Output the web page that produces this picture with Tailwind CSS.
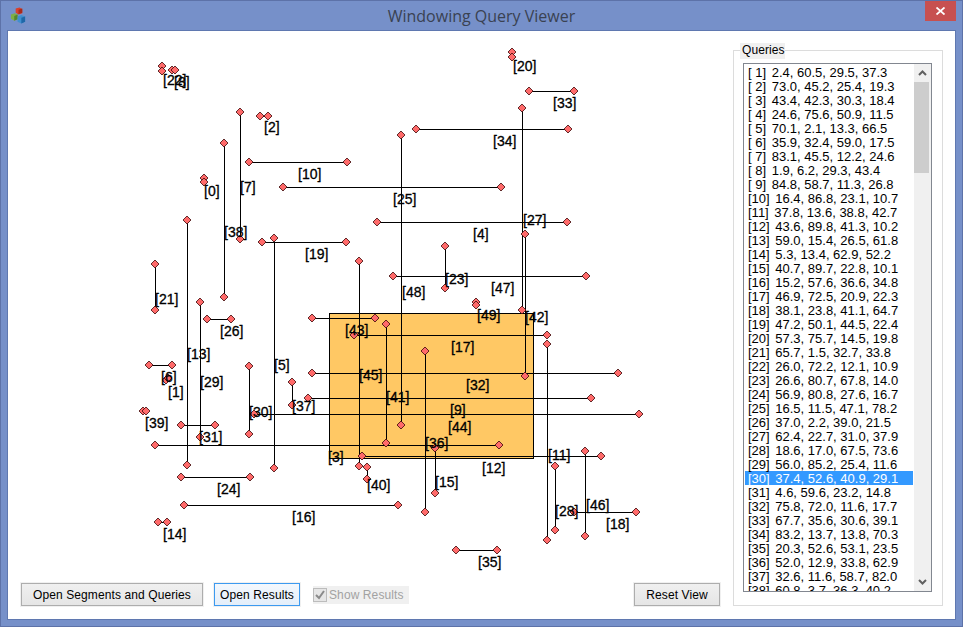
<!DOCTYPE html>
<html lang="en">

<head>
  <meta charset="UTF-8">
  <title>Windowing Query Viewer</title>
  <script src="https://cdn.jsdelivr.net/npm/@tailwindcss/browser@4"></script>
</head>

<body class="w-[963px] h-[627px] overflow-hidden bg-[#7690c9] font-['Liberation_Sans',sans-serif]">
  <div class="w-full h-full flex flex-col border border-[#5d72a8]">
    <!-- title bar -->
    <div class="h-[29px] shrink-0 grid grid-cols-[1fr_auto_1fr] items-start">
      <svg class="ml-[9px] mt-[6px]" width="17" height="17" viewBox="0 0 18 18">
        <path d="M6 1.500l4-1 3 1.500v4.500l-4 1.500-3-2z" fill="#d8402c" />
        <path d="M9 3l4-1.500v4.500l-4 1.500z" fill="#a82a1c" />
        <path d="M1 8l4-1.500 3 1.500v5l-3.500 1.500-3.500-2z" fill="#7fae46" />
        <path d="M4.500 9.500l3.500-1.500v5l-3.500 1.500z" fill="#55862c" />
        <path d="M8 10l4-1.500 4 1.500v5.500l-4 2-4-2z" fill="#3f8fcf" />
        <path d="M12 11.500l4-1.500v5.500l-4 2z" fill="#1f68a8" />
      </svg>
      <div class="font-['Open_Sans',sans-serif] text-[16px] leading-[20px] mt-[5px] text-[#3a4252]">Windowing Query Viewer</div>
      <div class="ml-auto mr-[6px] w-[31px] h-[20px] bg-[#c75050] flex items-center justify-center">
        <svg width="9" height="8" viewBox="0 0 9 8" fill="none" stroke="#fff" stroke-width="1.800">
          <path d="M0.500 0.500l8 7M8.500 0.500l-8 7" />
        </svg>
      </div>
    </div>

    <!-- client area -->
    <div class="h-[590px] mx-[6px] border border-[#5f78b0] bg-white flex">
      <div class="w-[725px] flex flex-col">
        <svg id="plot" class="block shrink-0" width="725" height="552" viewBox="8 31 725 552"></svg>
        <div class="flex items-start pl-[13px] pr-[13px] text-[12px] tracking-[0.1px] text-black">
          <button class="w-[182px] h-[23px] border border-[#adadad] bg-linear-to-b from-[#f0f0f0] to-[#e5e5e5] outline outline-[#f0f0f0]">Open Segments and Queries</button>
          <button class="ml-[11px] w-[86px] h-[23px] border border-[#3c9af0] bg-linear-to-b from-[#f3f8fd] to-[#e4eefa] outline outline-[#f0f0f0]">Open Results</button>
          <div class="ml-[13px] mt-[3px] w-[96px] h-[18px] bg-[#f0f0f0] flex items-center text-[#a2a2a2]">
            <svg width="14" height="14" viewBox="0 0 14 14" class="shrink-0">
              <rect x="0.500" y="0.500" width="13" height="13" fill="#e6e6e6" stroke="#bcbcbc" />
              <path d="M3 7l3 3 5-7" fill="none" stroke="#8a8a8a" stroke-width="2" />
            </svg>
            <span class="ml-[2px]">Show Results</span>
          </div>
          <button class="ml-auto w-[86px] h-[23px] border border-[#adadad] bg-linear-to-b from-[#f0f0f0] to-[#e5e5e5] outline outline-[#f0f0f0]">Reset View</button>
        </div>
      </div>

      <!-- queries group -->
      <div class="relative w-[210px] h-[556px] mt-[19px] border border-[#dcdcdc] pl-[9px] pr-[10px] pt-[12px] pb-[13px]">
        <div class="absolute left-[6px] top-[-8px] w-[45px] h-[16px] bg-[#f0f0f0] px-[2px] text-[12px] leading-[15px] tracking-[0.1px] text-black">Queries</div>
        <div class="h-full border border-[#828790] flex bg-white">
          <div id="rows" class="w-[169px] h-full overflow-hidden pt-px pl-px text-[13px] leading-[16px] text-black"></div>
          <div class="ml-auto w-[17px] h-full bg-[#f0f0f0] flex flex-col">
            <div class="h-[18px] flex items-center justify-center">
              <svg width="9" height="6" viewBox="0 0 9 6" fill="none" stroke="#606060" stroke-width="2"><path d="M1 5l3.500-3.500 3.500 3.500" /></svg>
            </div>
            <div class="w-[15px] h-[91px] bg-[#cdcdcd]"></div>
            <div class="mt-auto h-[18px] flex items-center justify-center">
              <svg width="9" height="6" viewBox="0 0 9 6" fill="none" stroke="#606060" stroke-width="2"><path d="M1 1l3.500 3.500 3.500-3.500" /></svg>
            </div>
          </div>
        </div>
      </div>
    </div>
  </div>

  <script>
    // query list
    const queries = [
      '2.4, 60.5, 29.5, 37.3', '73.0, 45.2, 25.4, 19.3', '43.4, 42.3, 30.3, 18.4', '24.6, 75.6, 50.9, 11.5',
      '70.1, 2.1, 13.3, 66.5', '35.9, 32.4, 59.0, 17.5', '83.1, 45.5, 12.2, 24.6', '1.9, 6.2, 29.3, 43.4',
      '84.8, 58.7, 11.3, 26.8', '16.4, 86.8, 23.1, 10.7', '37.8, 13.6, 38.8, 42.7', '43.6, 89.8, 41.3, 10.2',
      '59.0, 15.4, 26.5, 61.8', '5.3, 13.4, 62.9, 52.2', '40.7, 89.7, 22.8, 10.1', '15.2, 57.6, 36.6, 34.8',
      '46.9, 72.5, 20.9, 22.3', '38.1, 23.8, 41.1, 64.7', '47.2, 50.1, 44.5, 22.4', '57.3, 75.7, 14.5, 19.8',
      '65.7, 1.5, 32.7, 33.8', '26.0, 72.2, 12.1, 10.9', '26.6, 80.7, 67.8, 14.0', '56.9, 80.8, 27.6, 16.7',
      '16.5, 11.5, 47.1, 78.2', '37.0, 2.2, 39.0, 21.5', '62.4, 22.7, 31.0, 37.9', '18.6, 17.0, 67.5, 73.6',
      '56.0, 85.2, 25.4, 11.6', '37.4, 52.6, 40.9, 29.1', '4.6, 59.6, 23.2, 14.8', '75.8, 72.0, 11.6, 17.7',
      '67.7, 35.6, 30.6, 39.1', '83.2, 13.7, 13.8, 70.3', '20.3, 52.6, 53.1, 23.5', '52.0, 12.9, 33.8, 62.9',
      '32.6, 11.6, 58.7, 82.0', '60.8, 3.7, 36.3, 40.2'
    ];
    const rows = document.getElementById('rows');
    queries.forEach(function (q, i) {
      const n = i + 1;
      const row = document.createElement('div');
      row.className = n === 30
        ? 'h-[14px] pl-[3px] whitespace-pre bg-[#3399ff] text-white'
        : 'h-[14px] pl-[3px] whitespace-pre';
      const tag = document.createElement('span');
      tag.className = 'mr-[2px]';
      tag.textContent = '[' + (n < 10 ? ' ' + n : n) + '] ';
      row.appendChild(tag);
      row.appendChild(document.createTextNode(q));
      rows.appendChild(row);
    });

    // segments: x1, y1, x2, y2
    const segments = [
      [162, 66, 162, 71], [172, 70, 175, 70], [260, 116, 268, 116], [240, 112, 240, 239], [249, 162, 347, 162],
      [224, 143, 224, 297], [204, 178, 204, 182], [283, 187, 501, 187], [262, 242, 346, 242], [274, 238, 274, 468],
      [187, 220, 187, 465], [155, 264, 155, 310], [200, 302, 200, 437], [207, 319, 231, 319], [149, 365, 172, 365],
      [166, 380, 168, 378], [292, 382, 292, 405], [249, 366, 249, 434], [143, 411, 146, 411], [181, 425, 215, 425],
      [155, 445, 499, 445], [181, 477, 250, 477], [184, 505, 398, 505], [158, 522, 167, 522], [359, 261, 359, 466],
      [312, 318, 375, 318], [312, 373, 618, 373], [386, 324, 386, 443], [401, 135, 401, 425], [308, 398, 591, 398],
      [254, 414, 639, 414], [354, 335, 547, 335], [547, 344, 547, 540], [425, 351, 425, 512], [522, 108, 522, 310],
      [525, 234, 525, 376], [416, 129, 568, 129], [529, 91, 574, 91], [512, 52, 512, 57], [377, 222, 567, 222],
      [445, 246, 445, 288], [393, 276, 586, 276], [476, 302, 476, 305], [362, 456, 601, 456], [435, 448, 435, 493],
      [367, 467, 367, 479], [555, 466, 555, 530], [585, 451, 585, 536], [574, 512, 636, 512], [456, 550, 497, 550]
    ];

    // labels: index, left, baseline
    const labels = [
      [22, 163, 85], [8, 174, 87], [2, 264, 132], [10, 298, 179], [0, 204, 196], [7, 240, 192], [25, 393, 204],
      [34, 493, 146], [33, 553, 108], [20, 513, 71], [27, 523, 225], [4, 473, 239], [23, 445, 284], [47, 491, 293],
      [48, 402, 297], [38, 224, 237], [19, 305, 259], [21, 155, 304], [26, 220, 336], [13, 187, 359], [5, 274, 370],
      [43, 345, 335], [6, 161, 382], [1, 168, 397], [29, 200, 387], [39, 145, 428], [30, 249, 417], [37, 292, 411],
      [31, 199, 442], [3, 328, 462], [24, 217, 494], [16, 292, 522], [14, 163, 539], [40, 367, 490], [49, 477, 320],
      [42, 525, 322], [17, 451, 352], [45, 359, 380], [32, 466, 390], [41, 386, 402], [9, 450, 415], [44, 448, 432],
      [36, 425, 448], [12, 482, 473], [11, 548, 460], [15, 435, 487], [28, 555, 516], [46, 586, 510], [18, 606, 529],
      [35, 478, 567]
    ];

    const plot = document.getElementById('plot');
    const NS = 'http://www.w3.org/2000/svg';
    function add(tag, attrs, text) {
      const el = document.createElementNS(NS, tag);
      for (const k in attrs) el.setAttribute(k, attrs[k]);
      if (text) el.textContent = text;
      plot.appendChild(el);
    }

    add('rect', { x: 329.5, y: 313.5, width: 204, height: 145, fill: '#ffc864', stroke: '#000' });
    segments.forEach(function (s) {
      add('line', { x1: s[0] + 0.5, y1: s[1] + 0.5, x2: s[2] + 0.5, y2: s[3] + 0.5, stroke: '#000' });
    });
    function diamond(x, y) {
      const p = [[x, y - 4], [x + 4, y], [x, y + 4], [x - 4, y]].join(' ');
      add('polygon', { points: p, fill: '#ff6a6a', stroke: '#3a0606', 'stroke-width': 0.8 });
    }
    segments.forEach(function (s) {
      diamond(s[0], s[1]);
      diamond(s[2], s[3]);
    });
    labels.forEach(function (l) {
      add('text', { x: l[1], y: l[2], 'font-size': 14, fill: '#000', stroke: '#000', 'stroke-width': 0.3 }, '[' + l[0] + ']');
    });
  </script>
</body>

</html>
